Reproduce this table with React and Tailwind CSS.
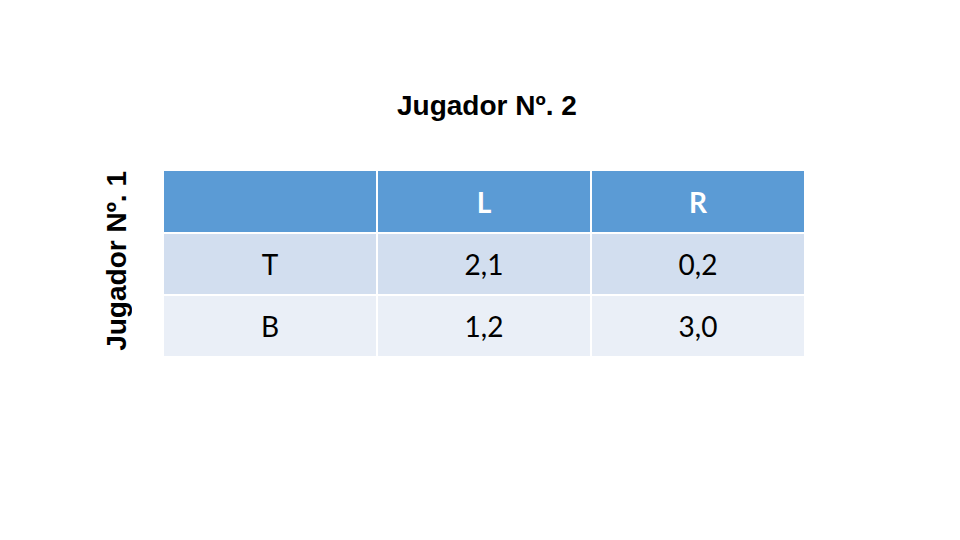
import { Fragment } from 'react';

export default function App() {
  const rows = [
    { label: 'T', l: '2,1', r: '0,2', bg: 'bg-[#d2deef]' },
    { label: 'B', l: '1,2', r: '3,0', bg: 'bg-[#eaeff7]' },
  ];

  return (
    <div className="w-[960px] h-[540px] bg-white overflow-hidden pt-[92px]">
      <h2 className="pl-[397px] text-[28px] leading-none font-bold text-black font-['Liberation_Sans',Arial,sans-serif]">
        Jugador Nº. 2
      </h2>

      <div className="flex items-center mt-[51px] pl-[103px]">
        <div className="[writing-mode:vertical-rl] rotate-180 text-[28px] leading-none font-bold text-black font-['Liberation_Sans',Arial,sans-serif] -mt-[6px]">
          Jugador Nº. 1
        </div>

        {/* payoff matrix */}
        <div className="ml-[33px] grid grid-cols-[212px_212px_212px] gap-[2px] bg-white font-['Lato',sans-serif] text-[28px] text-black">
          <div className="h-[61px] bg-[#5b9bd5]" />
          <div className="h-[61px] bg-[#5b9bd5] flex items-center justify-center font-bold text-white">L</div>
          <div className="h-[61px] bg-[#5b9bd5] flex items-center justify-center font-bold text-white">R</div>
          {rows.map((row) => (
            <Fragment key={row.label}>
              <div className={`h-[60px] ${row.bg} flex items-center justify-center`}>{row.label}</div>
              <div className={`h-[60px] ${row.bg} flex items-center justify-center`}>{row.l}</div>
              <div className={`h-[60px] ${row.bg} flex items-center justify-center`}>{row.r}</div>
            </Fragment>
          ))}
        </div>
      </div>
    </div>
  );
}
